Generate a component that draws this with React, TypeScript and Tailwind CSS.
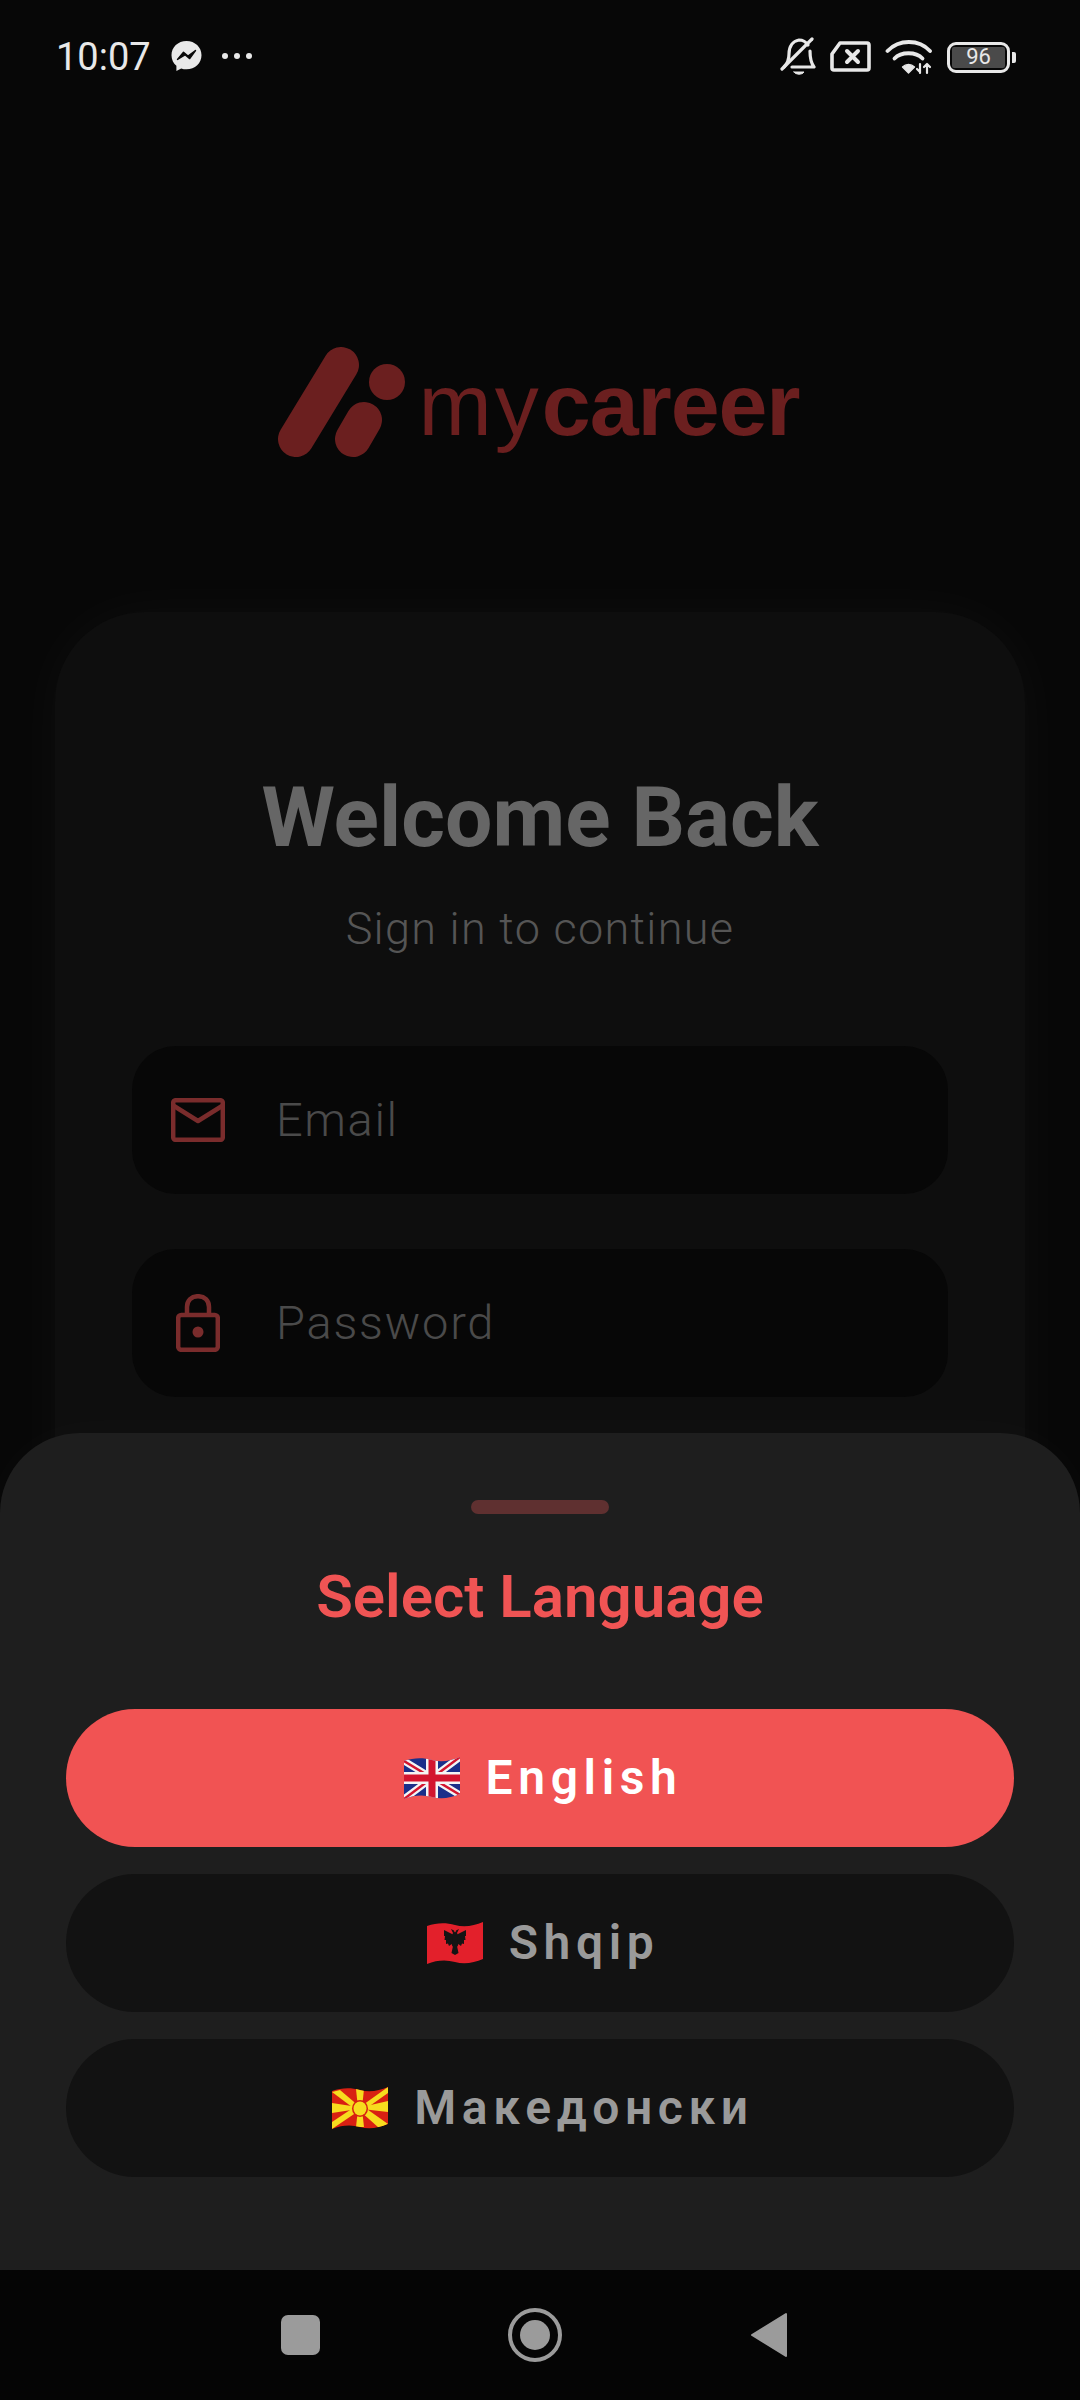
import React from "react";

const languages = [
  { id: "en", label: "English", active: true },
  { id: "sq", label: "Shqip", active: false },
  { id: "mk", label: "Македонски", active: false },
];

const WAVE =
  "M0 4 C 10 0.5 19 0.5 28 3 C 37 5.5 47 4 56 0 L56 37 C 47 41 37 42.5 28 40 C 19 37.5 10 38 0 42 Z";

function FlagShell({ id, children }: { id: string; children: React.ReactNode }) {
  return (
    <svg width="56" height="42" viewBox="0 0 56 42" className="shrink-0">
      <defs>
        <clipPath id={id}>
          <path d={WAVE} />
        </clipPath>
      </defs>
      <g clipPath={`url(#${id})`}>{children}</g>
    </svg>
  );
}

function FlagUK() {
  return (
    <FlagShell id="flag-uk">
      <rect width="56" height="42" fill="#1b2f8a" />
      <path d="M0 4 L56 38 M0 42 L56 0" stroke="#f4f4f4" strokeWidth="7" />
      <path d="M0 4 L56 38 M0 42 L56 0" stroke="#d3152f" strokeWidth="2.5" />
      <path d="M28 0 V42 M0 21 H56" stroke="#f4f4f4" strokeWidth="12" />
      <path d="M28 0 V42 M0 21 H56" stroke="#d3152f" strokeWidth="7" />
    </FlagShell>
  );
}

function FlagAL() {
  return (
    <FlagShell id="flag-al">
      <rect width="56" height="42" fill="#e3202b" />
      <g fill="#141414">
        <ellipse cx="28" cy="18" rx="4" ry="8" />
        <path d="M25 12 L17 8 L17 14 L18 14 L17.5 18 L19 18 L19 22 L21 21.5 L22 24 L26 21 Z" />
        <path d="M31 12 L39 8 L39 14 L38 14 L38.5 18 L37 18 L37 22 L35 21.5 L34 24 L30 21 Z" />
        <path d="M27.5 14 L24 7 L27 8.5 L28 12 L29 8.5 L32 7 L28.5 14 Z" />
        <path d="M26 24 L24.5 31 L28 33 L31.5 31 L30 24 Z" />
      </g>
    </FlagShell>
  );
}

function FlagMK() {
  return (
    <FlagShell id="flag-mk">
      <rect width="56" height="42" fill="#d82012" />
      <g fill="#f7dc1e">
        <path d="M0 5 L8 3 L28 20 L24 23 Z" />
        <path d="M56 0 L56 6 L32 23 L28 20 Z" />
        <path d="M0 42 L0 35 L24 19 L28 23 Z" />
        <path d="M56 37 L47 41 L28 24 L32 20 Z" />
        <path d="M24 2 L32 2 L30 21 L26 21 Z" />
        <path d="M24 40 L32 40 L30 22 L26 22 Z" />
        <path d="M0 16 L0 26 L26 22 L26 20 Z" />
        <path d="M56 14 L56 25 L30 22 L30 20 Z" />
        <ellipse cx="28" cy="21.5" rx="8" ry="8.5" fill="#d82012" />
        <ellipse cx="28" cy="21.5" rx="6.5" ry="7" />
      </g>
    </FlagShell>
  );
}

const flags: Record<string, React.ReactNode> = {
  en: <FlagUK />,
  sq: <FlagAL />,
  mk: <FlagMK />,
};

function StatusBar() {
  return (
    <div className="h-[100px] shrink-0 flex items-start justify-between pl-[56px] pr-[64px] pt-[38px] text-[#e8e8e8]">
      <div className="flex items-center">
        <span className="text-[38px] leading-[34px] pt-[2px]">10:07</span>
        {/* messenger */}
        <svg width="31" height="32" viewBox="0 0 31 32" className="ml-[20px]">
          <path
            d="M15.5 1 C7 1 0.5 7.2 0.5 15.2 C0.5 19.5 2.3 23.2 5.4 25.7 V31 L10.2 28.4 C11.9 29 13.6 29.3 15.5 29.3 C24 29.3 30.5 23.1 30.5 15.2 C30.5 7.2 24 1 15.5 1 Z"
            fill="#e8e8e8"
          />
          <path
            d="M6.5 19.5 L12.5 12.3 L17 16 L24.5 10.5 L18.7 18.6 L14 14.8 Z"
            fill="#0a0a0a"
            stroke="#0a0a0a"
            strokeWidth="1.4"
            strokeLinejoin="round"
          />
        </svg>
        <div className="flex gap-[6px] ml-[20px]">
          <span className="w-[6px] h-[6px] rounded-full bg-[#e8e8e8]" />
          <span className="w-[6px] h-[6px] rounded-full bg-[#e8e8e8]" />
          <span className="w-[6px] h-[6px] rounded-full bg-[#e8e8e8]" />
        </div>
      </div>
      <div className="flex items-center gap-[14px] -mt-[1px]">
        {/* bell off */}
        <svg width="36" height="40" viewBox="20 15 36 40" fill="none" stroke="#e8e8e8" strokeWidth="3.2" strokeLinecap="round" strokeLinejoin="round">
          <path d="M24 45 C28 41 29 37 29 32 C29 24 33 19 39 18 C43 18 46 20 48 23" />
          <path d="M50 29 C50 37 51 41 54 45 H32" />
          <path d="M22 47 L52 17" />
          <path d="M34 50 H44 C42 53 36 53 34 50 Z" fill="#e8e8e8" strokeWidth="1" />
        </svg>
        {/* sim error */}
        <svg width="42" height="34" viewBox="70 19 42 34" fill="none" stroke="#e8e8e8" strokeLinecap="round" strokeLinejoin="round">
          <path d="M80 22 H107 Q109 22 109 24 V47 Q109 49 107 49 H74 Q72 49 72 47 V33 Z" strokeWidth="3.6" />
          <path d="M87 30 L98 41 M98 30 L87 41" strokeWidth="4" />
        </svg>
        {/* wifi */}
        <svg width="48" height="36" viewBox="125 17 48 36" fill="none" stroke="#e8e8e8" strokeLinecap="round" strokeLinejoin="round" className="-ml-[1px]">
          <path d="M127.5 29 C139 17 159 17 170 29" strokeWidth="3.8" />
          <path d="M134.5 36.5 C141 29.5 156 29.5 162.5 36.5" strokeWidth="3.8" />
          <path d="M148.5 51 L142.5 45 C146 41.5 151 41.5 154.5 45 Z" fill="#e8e8e8" strokeWidth="1.4" />
          <path d="M160 42 V51 M157 47 L160 50 M167 51 V42 M164 45 L167 42 M170 45 L167 42" strokeWidth="2.2" />
        </svg>
        <div className="flex items-center gap-[2px]">
          <div className="w-[63px] h-[31px] border-[3px] border-[#e8e8e8] rounded-[9px] p-[2px]">
            <div className="h-full bg-[#4a4a4a] rounded-[2px] flex items-center justify-center text-[22px] leading-none text-[#e8e8e8]">
              96
            </div>
          </div>
          <span className="w-[4px] h-[11px] rounded-r-[2px] bg-[#e8e8e8]" />
        </div>
      </div>
    </div>
  );
}

function Logo() {
  return (
    <div className="mt-[247px] h-[112px] shrink-0 flex items-center justify-center pr-[4px] text-[#6b1f1f]">
      <svg width="130" height="112" viewBox="278 347 130 112" fill="none" stroke="#6b1f1f" strokeLinecap="round" className="shrink-0">
        <path d="M342 365 L297 439" strokeWidth="36" />
        <path d="M365 420 L354 439" strokeWidth="36" />
        <circle cx="388" cy="382" r="18" fill="#6b1f1f" stroke="none" />
      </svg>
      <div className="ml-[12px] text-[88px] leading-[112px] font-['Liberation_Sans',sans-serif] mt-[4px]">
        <span className="tracking-[3px]">my</span>
        <span className="font-bold tracking-[-1.1px]">career</span>
      </div>
    </div>
  );
}

export default function App() {
  return (
    <div className="relative w-[1080px] h-[2400px] overflow-hidden bg-[#070707] font-['Roboto',sans-serif] flex flex-col">
      <StatusBar />
      <Logo />

      {/* Login card, behind the scrim */}
      <div className="mt-[153px] mx-[55px] h-[1500px] shrink-0 rounded-[90px] bg-[#0e0e0e] shadow-[0_0_60px_rgba(255,255,255,0.035)] px-[77px] pt-[159px]">
        <h1 className="text-center text-[84px] leading-[94px] font-bold text-[#666666]">Welcome Back</h1>
        <p className="mt-[38px] text-center text-[45px] leading-[52px] font-light tracking-[1.3px] text-[#555555]">
          Sign in to continue
        </p>
        <div className="mt-[91px] h-[148px] rounded-[44px] bg-[#070707] flex items-center pl-[39px]">
          <svg width="54" height="44" viewBox="0 0 54 44" fill="none" stroke="#7a2c2c" strokeWidth="4.5" strokeLinejoin="round" className="shrink-0">
            <rect x="2.2" y="2.2" width="49.6" height="39.6" rx="2.5" />
            <path d="M3 8 L27 23 L51 8" />
          </svg>
          <input
            placeholder="Email"
            className="ml-[51px] flex-1 min-w-0 bg-transparent text-[47px] font-light tracking-[1.6px] outline-none placeholder:text-[#4a4a4a]"
          />
        </div>
        <div className="mt-[55px] h-[148px] rounded-[44px] bg-[#070707] flex items-center pl-[44px]">
          <svg width="44" height="58" viewBox="0 0 44 58" fill="none" stroke="#7a2c2c" strokeWidth="4.5" className="shrink-0 -mt-[1px]">
            <rect x="2.2" y="21" width="39.6" height="34.8" rx="3" />
            <path d="M11 21 V13 C11 6.5 15.5 2.2 22 2.2 C28.5 2.2 33 6.5 33 13 V21" />
            <circle cx="22" cy="38" r="5.5" fill="#7a2c2c" stroke="none" />
          </svg>
          <input
            placeholder="Password"
            className="ml-[56px] flex-1 min-w-0 bg-transparent text-[47px] font-light tracking-[1.8px] outline-none placeholder:text-[#4a4a4a]"
          />
        </div>
      </div>

      {/* Language sheet and navigation bar */}
      <div className="absolute inset-x-0 bottom-0 flex flex-col">
        <div className="h-[837px] rounded-t-[80px] bg-[#1e1e1e] shadow-[0_0_60px_rgba(255,255,255,0.025)] px-[66px] pt-[67px] flex flex-col">
          <div className="self-center w-[138px] h-[14px] rounded-full bg-[#5f3030]" />
          <h2 className="mt-[50px] text-center text-[60px] leading-[66px] font-semibold text-[#f05454]">Select Language</h2>
          <div className="mt-[79px] flex flex-col gap-[27px]">
            {languages.map((lang) => (
              <button
                key={lang.id}
                className={`h-[138px] rounded-full flex items-center justify-center gap-[26px] pl-[6px] text-[48px] font-semibold tracking-[5.6px] ${lang.active ? "bg-[#f15353] text-white" : "bg-[#121212] text-[#9a9a9a]"}`}
              >
                {flags[lang.id]}
                <span>{lang.label}</span>
              </button>
            ))}
          </div>
        </div>
        <div className="h-[130px] bg-[#050505] flex items-center pl-[281px]">
          <span className="w-[39px] h-[40px] rounded-[7px] bg-[#9b9b9b]" />
          <span className="ml-[188px] w-[54px] h-[54px] rounded-full border-[4px] border-[#9b9b9b] flex items-center justify-center">
            <span className="w-[30px] h-[30px] rounded-full bg-[#9b9b9b]" />
          </span>
          <svg width="38" height="46" viewBox="0 0 38 46" className="ml-[188px]">
            <path d="M36 2 V44 L2 23 Z" fill="#9b9b9b" stroke="#9b9b9b" strokeWidth="2" strokeLinejoin="round" />
          </svg>
        </div>
      </div>
    </div>
  );
}
